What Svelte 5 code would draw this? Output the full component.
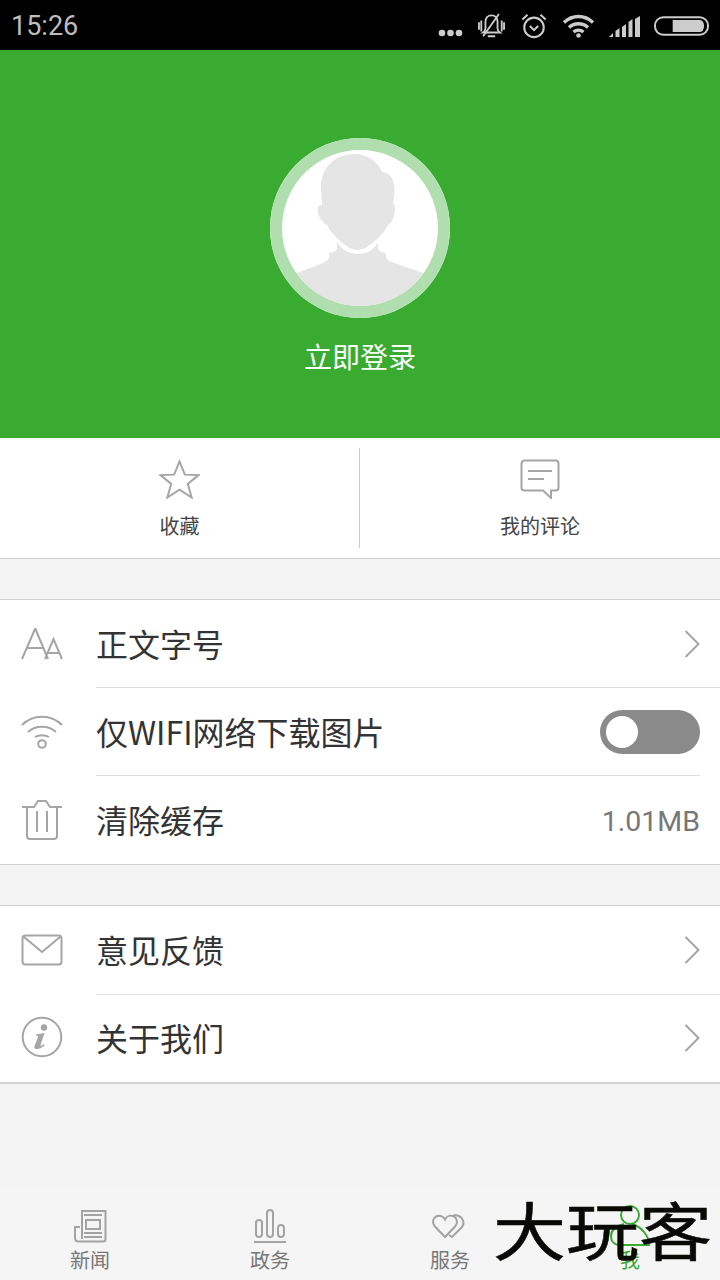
<script>
	const navItems = [
		{ id: 'news', label: '新闻' },
		{ id: 'gov', label: '政务' },
		{ id: 'service', label: '服务' },
		{ id: 'me', label: '我', active: true }
	];
</script>

<div class="page">
	<header class="status">
		<span class="status__time">15:26</span>
		<div class="status__icons">
			<svg class="i-dots" width="25" height="8" viewBox="0 0 25 8"><circle cx="4" cy="4" r="3.3" /><circle cx="12.5" cy="4" r="3.3" /><circle cx="21" cy="4" r="3.3" /></svg>
			<svg class="i-line" width="29" height="26" viewBox="0 0 30 28">
				<path d="M15 2.5c-4 0-6.5 3-6.5 7v7c0 2-1 3.500-2.500 4.500h18c-1.500-1-2.500-2.500-2.500-4.500v-7c0-4-2.500-7-6.500-7z" stroke-width="2" />
				<path d="M23 1 6 25M11 25h8M1.500 10v8M4 8v12M26 8v12M28.500 10v8" stroke-width="2" />
			</svg>
			<svg class="i-line" width="28" height="26" viewBox="0 0 28 28">
				<circle cx="14" cy="15.500" r="10.500" stroke-width="2.200" />
				<path d="m9.500 14 4.500 4.500 4.500-4.500M1.500 7 7 2M26.500 7 21 2" stroke-width="2.200" />
			</svg>
			<svg class="i-line" width="33" height="24" viewBox="0 0 32 24">
				<path d="M1.500 8.500c8.500-8 20.500-8 29 0M6.500 13.500c5.500-5 13.500-5 19 0M11 18c3-2.500 7-2.500 10 0" stroke-width="3.400" />
				<circle class="fill" cx="16" cy="21.500" r="2.300" />
			</svg>
			<svg class="fill-only" width="31" height="21" viewBox="0 0 31 21"><path d="M0 21l4-4v4zM6.500 15l4-3v9h-4zM13 11l4-3v13h-4zM19.500 6l4-3v18h-4zM26 3l5-3v21h-5z" /></svg>
			<svg width="55" height="20" viewBox="0 0 56 20"><rect x="1" y="1" width="54" height="18" rx="8.500" fill="none" stroke="#ccc" stroke-width="2" /><path d="M19 4h28a4 6 0 0 1 4 6 4 6 0 0 1-4 6H19z" fill="#ccc" /></svg>
		</div>
	</header>

	<section class="hero">
		<div class="avatar">
			<svg width="156" height="156" viewBox="0 0 156 156">
				<path fill="#e5e5e5" d="M0 130 15 123 41 113Q47 110 47 107V103Q55 102 55 98V92Q62 104 76 104 90 104 96 92V98Q96 102 104 103V107Q104 110 110 112L141 123 156 130V156H0z" />
				<path fill="#e5e5e5" d="M73 4C52 4 39 18 39 37 39 44 40 50 40 55 36 55 35 58 36 62 37 68 41 73 45 75 49 84 60 93 66 97 72 101 79 101 85 97 91 93 102 84 106 75 110 73 113 66 113 58 113 55 112 54 111 54 112 48 113 42 112 35 111 28 108 23 100 22 96 12 86 4 73 4z" />
			</svg>
		</div>
		<p class="hero__login">立即登录</p>
	</section>

	<section class="actions">
		<div class="action">
			<svg class="ic" width="41" height="40" viewBox="0 0 42 41"><path d="M21 2.500 26.500 16 40.500 16.500 29.500 25.500 33.500 39.500 21 31.500 8.500 39.500 12.500 25.500 1.500 16.500 15.500 16z" /></svg>
			<span>收藏</span>
		</div>
		<div class="action">
			<svg class="ic" width="42" height="40" viewBox="0 0 42 40"><path d="M5.500 1.500h31a3 3 0 0 1 3 3v24a3 3 0 0 1-3 3h-4.500v7.500l-8-7.500H5.500a3 3 0 0 1-3-3v-24a3 3 0 0 1 3-3zM9 12h24M9 20h16" /></svg>
			<span>我的评论</span>
		</div>
	</section>

	<section class="group group--first">
		<div class="row">
			<svg class="ic" width="42" height="34" viewBox="0 0 42 34"><path d="M1 32 14 2h.500L27 32M6 21h17M24 32 32.500 12 41 32M27 26h11" /></svg>
			<div class="row__body">
				<span class="row__label">正文字号</span>
				<svg class="chev" width="16" height="28" viewBox="0 0 16 28"><path d="m1.500 1 13 13-13 13" /></svg>
			</div>
		</div>
		<div class="row">
			<svg class="ic" width="42" height="34" viewBox="0 0 42 34"><path d="M1 10c11-11 29-11 40 0M7 17c8-7 20-7 28 0M14 22c4-2.500 10-2.500 14 0" /><circle cx="21" cy="29" r="3.800" /></svg>
			<div class="row__body row__body--short">
				<span class="row__label">仅WIFI网络下载图片</span>
				<div class="toggle"><span class="toggle__knob"></span></div>
			</div>
		</div>
		<div class="row">
			<svg class="ic" width="42" height="42" viewBox="0 0 42 42"><path d="M1 8h12l4-6h8l4 6h12M6 8v29a3 3 0 0 0 3 3h24a3 3 0 0 0 3-3V8M16 12v21M26 12v21" /></svg>
			<div class="row__body">
				<span class="row__label">清除缓存</span>
				<span class="row__value">1.01MB</span>
			</div>
		</div>
	</section>

	<section class="group group--second">
		<div class="row">
			<svg class="ic" width="42" height="32" viewBox="0 0 42 32"><rect x="1.500" y="1.500" width="39" height="29" rx="3" /><path d="M3 3 21 18 39 3" /></svg>
			<div class="row__body">
				<span class="row__label">意见反馈</span>
				<svg class="chev" width="16" height="28" viewBox="0 0 16 28"><path d="m1.500 1 13 13-13 13" /></svg>
			</div>
		</div>
		<div class="row">
			<svg class="ic" width="42" height="42" viewBox="0 0 42 42">
				<circle cx="21" cy="21" r="19.300" />
				<circle class="ic__fill" cx="23" cy="11.500" r="3.200" />
				<path class="ic__fill" d="M15 18.500 23.500 17 19.500 29c-.3 1.200.8 1.200 3.500-1l.7 1c-3 3-6 4.500-8.500 4-2-.5-2-2-1.500-3.500L17 21c.4-1.500-.6-1.500-2-1z" />
			</svg>
			<div class="row__body">
				<span class="row__label">关于我们</span>
				<svg class="chev" width="16" height="28" viewBox="0 0 16 28"><path d="m1.500 1 13 13-13 13" /></svg>
			</div>
		</div>
	</section>

	<nav class="tabs">
		{#each navItems as item}
			<div class="tab" class:tab--active={item.active}>
				{#if item.id === 'news'}
					<svg width="34" height="34" viewBox="0 0 34 34" fill="none" stroke="#a3a3a3" stroke-width="2"><path d="M7 18H2v11c0 2 1.500 3.500 3.500 3.500H30c1.500 0 2.500-1 2.500-2.500V2H9v28M11 6h18M13 11h14v9H13zM11 24h18M11 28h18" /></svg>
				{:else if item.id === 'gov'}
					<svg width="34" height="34" viewBox="0 0 34 34" fill="none" stroke="#a3a3a3" stroke-width="2"><rect x="3" y="11" width="6" height="17" rx="3" /><rect x="14" y="1" width="6" height="27" rx="3" /><rect x="25" y="16" width="6" height="12" rx="3" /><path d="M1 33h32" /></svg>
				{:else if item.id === 'service'}
					<svg width="36" height="34" viewBox="0 0 36 24" fill="none" stroke="#a3a3a3" stroke-width="2"><path d="M13 23 2.500 12C0 9 1 4 4 2.500c3-1.500 7-1 9 3 2-4 6-4.500 9-3 3 1.500 4 6.500 1.500 9.500z" /><path d="M20 2.300c2-1.300 4.500-1.500 7-.3 4 2 6 7 3 11l-10 10-3-2" /></svg>
				{:else}
					<svg class="tab__me" width="40" height="42" viewBox="0 0 40 42" fill="none" stroke="#38ab30" stroke-width="2"><circle cx="20" cy="10" r="9" /><path d="M14 19C6 21 1 25 1 31c0 6 4 9 9 9h29c0-9-7-18-17-21" /></svg>
				{/if}
				<span class="tab__label">{item.label}</span>
			</div>
		{/each}
	</nav>

	<span class="watermark">大玩客</span>
</div>

<style>
	:global(body) {
		background: #f3f3f3;
	}

	.page {
		position: relative;
		display: flex;
		flex-direction: column;
		width: 720px;
		height: 1280px;
		overflow: hidden;
		background: #f3f3f3;
		font-family: 'Noto Sans CJK SC', 'Noto Sans', sans-serif;
		color: #333;
	}

	/* Status bar */
	.status {
		display: flex;
		align-items: center;
		justify-content: space-between;
		height: 50px;
		padding: 2px 11px 0;
		background: #000;
		box-sizing: border-box;
	}

	.status__time {
		font-family: Roboto, sans-serif;
		font-size: 27px;
		color: #bdbdbd;
	}

	.status__icons {
		display: flex;
		align-items: center;
		gap: 14px;
	}

	.status__icons svg {
		display: block;
	}

	.i-dots {
		fill: #ccc;
		margin-top: 14px;
	}

	.i-line {
		fill: none;
		stroke: #ccc;
	}

	.i-line .fill {
		fill: #ccc;
		stroke: none;
	}

	.fill-only {
		fill: #ccc;
	}

	/* Hero */
	.hero {
		display: flex;
		flex-direction: column;
		align-items: center;
		height: 388px;
		padding-top: 88px;
		background: #38ab30;
		box-sizing: border-box;
	}

	.avatar {
		width: 180px;
		height: 180px;
		padding: 12px;
		border-radius: 50%;
		background: #fff;
		box-sizing: border-box;
		box-shadow: inset 0 0 0 12px #b1deae;
	}

	.avatar svg {
		display: block;
		border-radius: 50%;
	}

	.hero__login {
		margin: 18px 0 0;
		font-size: 28px;
		line-height: 40px;
		color: #fff;
	}

	/* Favourites and comments */
	.actions {
		display: grid;
		grid-template-columns: 1fr 1fr;
		height: 121px;
		padding: 10px 0;
		background: #fff;
		border-bottom: 1px solid #d0d0d0;
		box-sizing: border-box;
	}

	.action {
		display: flex;
		flex-direction: column;
		align-items: center;
		gap: 12px;
		padding-top: 11px;
		font-size: 20px;
		line-height: 30px;
		color: #444;
	}

	.action:first-child {
		border-right: 1px solid #ccc;
	}

	.ic {
		flex: none;
		fill: none;
		stroke: #a5a5a5;
		stroke-width: 2;
	}

	.ic__fill {
		fill: #a5a5a5;
		stroke: none;
	}

	/* Settings groups */
	.group {
		margin-top: 40px;
		background: #fff;
		border-top: 1px solid #d0d0d0;
		border-bottom: 1px solid #d0d0d0;
	}

	.group--second {
		border-bottom-width: 2px;
	}

	.group--second .row:first-child {
		height: 89px;
	}

	.group--second .row:first-child > .ic {
		margin-top: -2px;
	}

	.group--second .row:last-child {
		height: 87px;
	}

	.group--second .row:last-child > .ic {
		margin-top: -3px;
	}

	.group--second .row:last-child .row__body {
		padding-bottom: 2px;
	}

	.row {
		display: flex;
		align-items: center;
		height: 88px;
	}

	.row > .ic {
		margin: 0 33px 0 21px;
	}

	.row__body {
		flex: 1;
		align-self: stretch;
		display: flex;
		align-items: center;
		justify-content: space-between;
		padding-right: 20px;
		border-bottom: 1px solid #dedede;
	}

	.row:last-child .row__body {
		border-bottom: 0;
	}

	.row__body--short {
		margin-right: 20px;
		padding-right: 0;
	}

	.row__label {
		font-size: 32px;
		line-height: 44px;
		margin-bottom: 2px;
		color: #333;
	}

	.row__value {
		font-family: Roboto, sans-serif;
		font-size: 28.500px;
		margin-top: 2px;
		color: #777;
	}

	.chev {
		fill: none;
		stroke: #a5a5a5;
		stroke-width: 2;
	}

	.toggle {
		display: flex;
		align-items: center;
		width: 100px;
		height: 44px;
		padding-left: 6px;
		border-radius: 22px;
		background: #8a8a8a;
		box-sizing: border-box;
	}

	.toggle__knob {
		width: 32px;
		height: 32px;
		border-radius: 50%;
		background: #fff;
	}

	/* Tab bar */
	.tabs {
		position: absolute;
		left: 0;
		right: 0;
		bottom: 0;
		display: grid;
		grid-template-columns: repeat(4, 1fr);
		height: 95px;
		background: #f5f5f5;
	}

	.tab {
		display: flex;
		flex-direction: column;
		align-items: center;
		justify-content: flex-end;
		padding-bottom: 5px;
		color: #777;
	}

	.tab svg {
		display: block;
		flex: none;
	}

	.tab .tab__me {
		margin: -4px 0;
	}

	.tab__label {
		font-size: 20px;
		line-height: 30px;
		margin-top: 2px;
	}

	.tab--active {
		color: #38ab30;
	}

	/* Watermark over the tab bar */
	.watermark {
		position: absolute;
		left: 493px;
		top: 1182px;
		font-size: 73px;
		line-height: 90px;
		color: #0a0a05;
		-webkit-text-stroke: 0.600px #0a0a05;
		white-space: nowrap;
		transform: scaleY(0.86);
	}
</style>
